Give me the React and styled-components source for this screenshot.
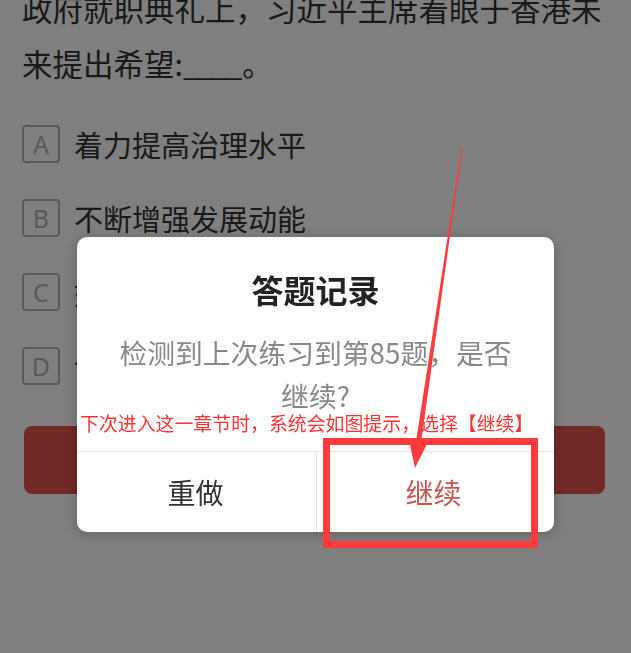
import React from "react";
import styled, { createGlobalStyle } from "styled-components";

const GlobalStyle = createGlobalStyle`
  html, body {
    margin: 0;
    padding: 0;
    background: #fff;
    font-family: "Noto Sans CJK SC", "Noto Sans", sans-serif;
  }
`;

const Page = styled.div`
  height: 653px;
  overflow: hidden;
  padding: 0 22px;
  box-sizing: border-box;
`;

const Question = styled.p`
  margin: -19px 0 0;
  font-size: 30.5px;
  line-height: 55px;
  color: #333;
`;

const Blank = styled.span`
  letter-spacing: -3px;
  margin-right: 3px;
`;

const Options = styled.div`
  display: flex;
  flex-direction: column;
  gap: 36px;
  margin-top: 34px;
`;

const Option = styled.div`
  display: flex;
  align-items: center;
  gap: 14px;
  height: 38px;
`;

const Letter = styled.span`
  width: 38px;
  height: 38px;
  box-sizing: border-box;
  border: 2px solid #b2b2b8;
  border-radius: 4px;
  display: flex;
  align-items: center;
  justify-content: center;
  font-family: "Noto Sans", sans-serif;
  font-size: 25px;
  color: #b2b2b8;
`;

const OptionText = styled.span`
  font-size: 29px;
  color: #333;
`;

const SubmitBar = styled.div`
  margin: 41px 0 0 2px;
  width: 581px;
  height: 68px;
  border-radius: 8px;
  background: #e4544f;
`;

const Overlay = styled.div`
  position: fixed;
  inset: 0;
  background: rgba(0, 0, 0, 0.5);
  display: flex;
  justify-content: center;
  align-items: flex-start;
  padding-top: 237px;
`;

const Dialog = styled.div`
  position: relative;
  width: 477px;
  background: #fff;
  border-radius: 10px;
  box-shadow: 0 2px 14px rgba(0, 0, 0, 0.25);
  text-align: center;
`;

const Title = styled.h2`
  margin: 0;
  padding-top: 32px;
  font-size: 32px;
  line-height: 40px;
  font-weight: 700;
  color: #222;
`;

const Message = styled.p`
  margin: 21.5px 0 0;
  font-size: 27.8px;
  line-height: 43px;
  color: #888;
`;

const Footer = styled.div`
  margin-top: 34.5px;
  border-top: 1px solid #e6e6e6;
  display: grid;
  grid-template-columns: 240px 1fr;
  height: 80px;
`;

const FooterButton = styled.div`
  display: flex;
  align-items: center;
  justify-content: center;
  font-size: 28px;
  color: ${(p) => (p.$primary ? "#c9574f" : "#333")};
  border-right: ${(p) => (p.$primary ? "none" : "1px solid #e6e6e6")};
  padding-right: ${(p) => (p.$primary ? "4px" : "2px")};
`;

const Note = styled.span`
  position: absolute;
  left: 3px;
  top: 175px;
  font-size: 18.9px;
  line-height: 22px;
  color: #ff3333;
  white-space: nowrap;
`;

const Marks = styled.svg`
  position: fixed;
  left: 0;
  top: 0;
  width: 631px;
  height: 653px;
  pointer-events: none;
`;

const options = [
  ["A", "着力提高治理水平"],
  ["B", "不断增强发展动能"],
  ["C", "始终维护和谐稳定"],
  ["D", "切实排解民生忧难"],
];

export default function App() {
  return (
    <>
      <GlobalStyle />
      <Page>
        <Question>
          政府就职典礼上，习近平主席着眼于香港未
          <br />
          来提出希望:<Blank>____</Blank>。
        </Question>
        <Options>
          {options.map(([k, t]) => (
            <Option key={k}>
              <Letter>{k}</Letter>
              <OptionText>{t}</OptionText>
            </Option>
          ))}
        </Options>
        <SubmitBar />
      </Page>
      <Overlay>
        <Dialog>
          <Title>答题记录</Title>
          <Message>
            检测到上次练习到第85题，是否
            <br />
            继续?
          </Message>
          <Footer>
            <FooterButton>重做</FooterButton>
            <FooterButton $primary>继续</FooterButton>
          </Footer>
          <Note>下次进入这一章节时，系统会如图提示，选择【继续】</Note>
        </Dialog>
      </Overlay>
      <Marks viewBox="0 0 631 653">
        <polygon
          points="462.5,147.1 461.5,146.9 415.7,443.8 420.7,444.6"
          fill="#ff3b3b"
        />
        <polygon points="415,468 409.5,442.5 426.5,445" fill="#ff3b3b" />
        <rect
          x="326.5"
          y="441.5"
          width="208"
          height="103"
          fill="none"
          stroke="#ff3b3b"
          strokeWidth="7"
        />
      </Marks>
    </>
  );
}
